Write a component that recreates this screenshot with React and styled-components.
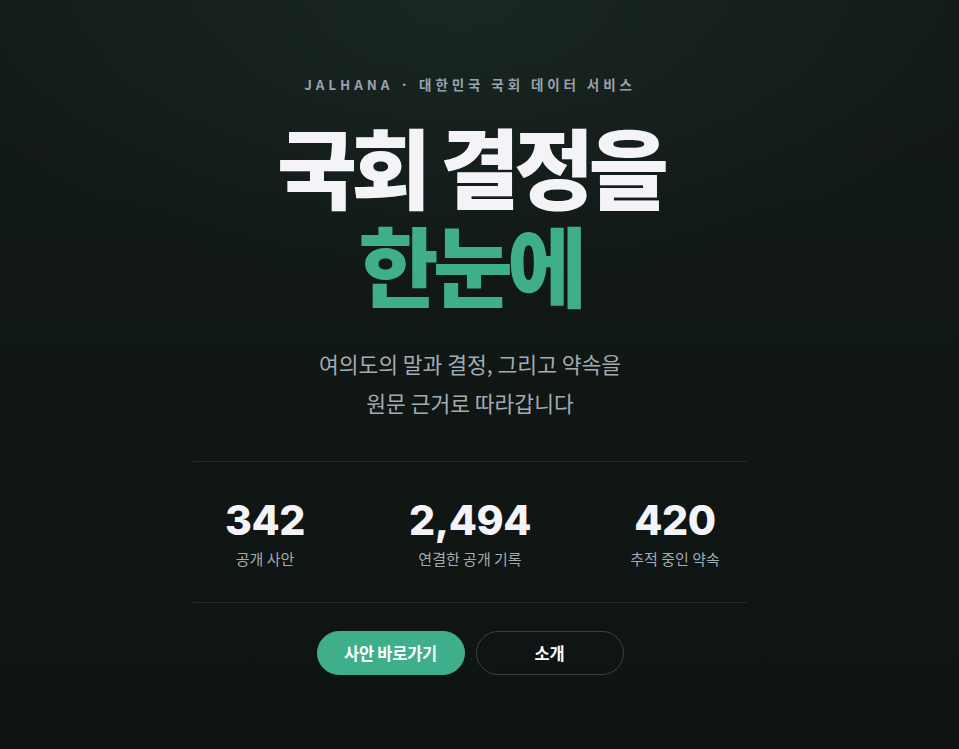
import React from "react";
import styled, { createGlobalStyle } from "styled-components";

const GlobalStyle = createGlobalStyle`
  html, body {
    margin: 0;
    padding: 0;
    background: #0f1614;
  }
  body {
    font-family: "Noto Sans CJK KR", "Noto Sans", sans-serif;
    color: #f4f5f8;
  }
`;

const stats = [
  { value: "342", label: "공개 사안" },
  { value: "2,494", label: "연결한 공개 기록" },
  { value: "420", label: "추적 중인 약속" },
];

const App = () => {
  return (
    <>
      <GlobalStyle />
      <Page>
        <Hero>
          <Eyebrow>JALHANA · 대한민국 국회 데이터 서비스</Eyebrow>
          <Title>
            <TitleLine>국회 결정을</TitleLine>
            <TitleLine accent>한눈에</TitleLine>
          </Title>
          <Lead>
            여의도의 말과 결정, 그리고 약속을
            <br />
            원문 근거로 따라갑니다
          </Lead>
          <StatsRow>
            {stats.map((s) => (
              <Stat key={s.label}>
                <StatValue>{s.value}</StatValue>
                <StatLabel>{s.label}</StatLabel>
              </Stat>
            ))}
          </StatsRow>
          <Actions>
            <Button primary>사안 바로가기</Button>
            <Button>소개</Button>
          </Actions>
        </Hero>
      </Page>
    </>
  );
};

export default App;

const Page = styled.main`
  min-height: 749px;
  box-sizing: border-box;
  padding: 0 19px 0 0;
  display: flex;
  justify-content: center;
  background:
    radial-gradient(ellipse 60% 40% at 48% 0%, rgba(38, 58, 51, 0.4), rgba(0, 0, 0, 0) 100%),
    linear-gradient(180deg, #121a18 0%, #0f1614 60%, #0e1412 100%);
`;

const Hero = styled.section`
  width: 554px;
  padding-top: 74px;
  display: flex;
  flex-direction: column;
  align-items: center;
  text-align: center;
`;

const Eyebrow = styled.div`
  font-family: "Noto Sans CJK KR", "Noto Sans", sans-serif;
  font-size: 13.5px;
  font-weight: 700;
  letter-spacing: 3.9px;
  color: #98a2ad;
  line-height: 20px;
`;

const Title = styled.h1`
  margin: 22px 0 0;
  font-family: "Noto Sans CJK KR", sans-serif;
  font-weight: 900;
  font-size: 87px;
  line-height: 98px;
  letter-spacing: -0.065em;
  display: flex;
  flex-direction: column;
  align-items: center;
`;

const TitleLine = styled.span`
  color: ${(p) => (p.accent ? "#3fae8a" : "#f4f4f8")};
`;

const Lead = styled.p`
  margin: 32px 0 0;
  font-size: 21.5px;
  line-height: 39px;
  font-weight: 400;
  color: #a3abb3;
  letter-spacing: 0;
`;

const StatsRow = styled.div`
  align-self: stretch;
  margin-top: 39px;
  border-top: 1px solid #232b29;
  border-bottom: 1px solid #232b29;
  padding: 36px 0 33px;
  display: flex;
  justify-content: space-between;
`;

const Stat = styled.div`
  width: 144px;
  display: flex;
  flex-direction: column;
  align-items: center;
`;

const StatValue = styled.div`
  font-family: Inter, "Noto Sans", sans-serif;
  font-weight: 800;
  font-size: 41px;
  line-height: 44px;
  letter-spacing: -0.01em;
  color: #f4f4f8;
`;

const StatLabel = styled.div`
  margin-top: 7px;
  font-size: 15px;
  line-height: 20px;
  color: #a3abb3;
`;

const Actions = styled.div`
  margin-top: 28px;
  display: flex;
  gap: 11px;
`;

const Button = styled.button`
  width: 148px;
  height: 44px;
  border-radius: 999px;
  font-family: "Noto Sans CJK KR", sans-serif;
  font-size: 16.5px;
  font-weight: 700;
  letter-spacing: -0.015em;
  color: #ffffff;
  cursor: pointer;
  background: ${(p) => (p.primary ? "#3fae8a" : "transparent")};
  border: 1px solid ${(p) => (p.primary ? "#3fae8a" : "#3a4240")};
`;
